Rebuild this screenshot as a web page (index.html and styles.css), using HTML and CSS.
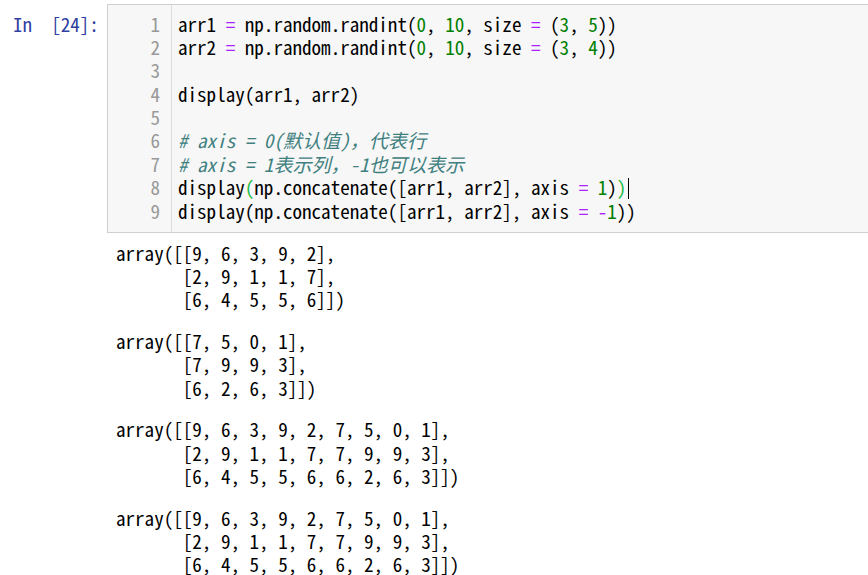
FILE: index.html
```html
<!DOCTYPE html>
<html lang="zh">
<head>
<meta charset="utf-8">
<title>Notebook cell</title>
<link rel="stylesheet" href="styles.css">
</head>
<body>
<div class="cell">
  <div class="prompt">In&nbsp; [24]:</div>
  <div class="editor">
    <div class="gutter">
      <div>1</div><div>2</div><div>3</div><div>4</div><div>5</div><div>6</div><div>7</div><div>8</div><div>9</div>
    </div>
<pre class="code">arr1 <span class="op">=</span> np.random.randint(<span class="num">0</span>, <span class="num">10</span>, size <span class="op">=</span> (<span class="num">3</span>, <span class="num">5</span>))
arr2 <span class="op">=</span> np.random.randint(<span class="num">0</span>, <span class="num">10</span>, size <span class="op">=</span> (<span class="num">3</span>, <span class="num">4</span>))
 
display(arr1, arr2)
 
<span class="cm"># axis = 0(<span class="cjk">默认值</span>)<span class="cjk">，代表行</span></span>
<span class="cm"># axis = 1<span class="cjk">表示列，</span>-1<span class="cjk">也可以表示</span></span>
display<span class="match">(</span>np.concatenate([arr1, arr2], axis <span class="op">=</span> <span class="num">1</span>)<span class="match">)</span><span class="cursor"></span>
display(np.concatenate([arr1, arr2], axis <span class="op">=</span> <span class="op">-</span><span class="num">1</span>))</pre>
  </div>
  <div class="outputs">
<pre class="out">array([[9, 6, 3, 9, 2],
       [2, 9, 1, 1, 7],
       [6, 4, 5, 5, 6]])</pre>
<pre class="out">array([[7, 5, 0, 1],
       [7, 9, 9, 3],
       [6, 2, 6, 3]])</pre>
<pre class="out">array([[9, 6, 3, 9, 2, 7, 5, 0, 1],
       [2, 9, 1, 1, 7, 7, 9, 9, 3],
       [6, 4, 5, 5, 6, 6, 2, 6, 3]])</pre>
<pre class="out">array([[9, 6, 3, 9, 2, 7, 5, 0, 1],
       [2, 9, 1, 1, 7, 7, 9, 9, 3],
       [6, 4, 5, 5, 6, 6, 2, 6, 3]])</pre>
  </div>
</div>
</body>
</html>
```

FILE: styles.css
```css
html, body {
  margin: 0;
  padding: 0;
  background: #ffffff;
  overflow: hidden;
}

.cell {
  display: grid;
  grid-template-columns: 107px 1fr;
  font-family: "Noto Sans Mono CJK SC", "Liberation Mono", "Noto Sans CJK SC", monospace;
  font-size: 19.08px;
  line-height: 23.375px;
  color: #000;
}

.prompt {
  padding-left: 13px;
  padding-top: 11.6px;
  color: #303f9f;
  white-space: pre;
}

.editor {
  margin-top: 4px;
  display: flex;
  background: #f7f7f7;
  border: 1px solid #cfcfcf;
  border-right: none;
  padding: 6.6px 0 9.4px 0;
}

.gutter {
  width: 52px;
  padding-right: 11px;
  text-align: right;
  color: #999999;
  border-right: 1px solid #dddddd;
  margin-top: -6.6px;
  margin-bottom: -9.4px;
  padding-top: 6.6px;
  padding-bottom: 9.4px;
}

.code {
  margin: 0;
  padding-left: 6px;
  font: inherit;
  white-space: pre;
}

.op { color: #aa22ff; }
.num { color: #008000; }
.cm { color: #408080; font-style: italic; }
.match { color: #22bb44; }

.cjk {
  font-family: "Noto Sans CJK SC", sans-serif;
  line-height: 1;
}

.cursor {
  display: inline-block;
  width: 0;
  height: 21px;
  border-left: 1.5px solid #000;
  margin-left: 2px;
  vertical-align: -4px;
}

.outputs {
  grid-column: 2;
}

.out {
  margin: 0;
  padding: 7.6px 0 10.6px 9px;
  font: inherit;
  white-space: pre;
}
```
